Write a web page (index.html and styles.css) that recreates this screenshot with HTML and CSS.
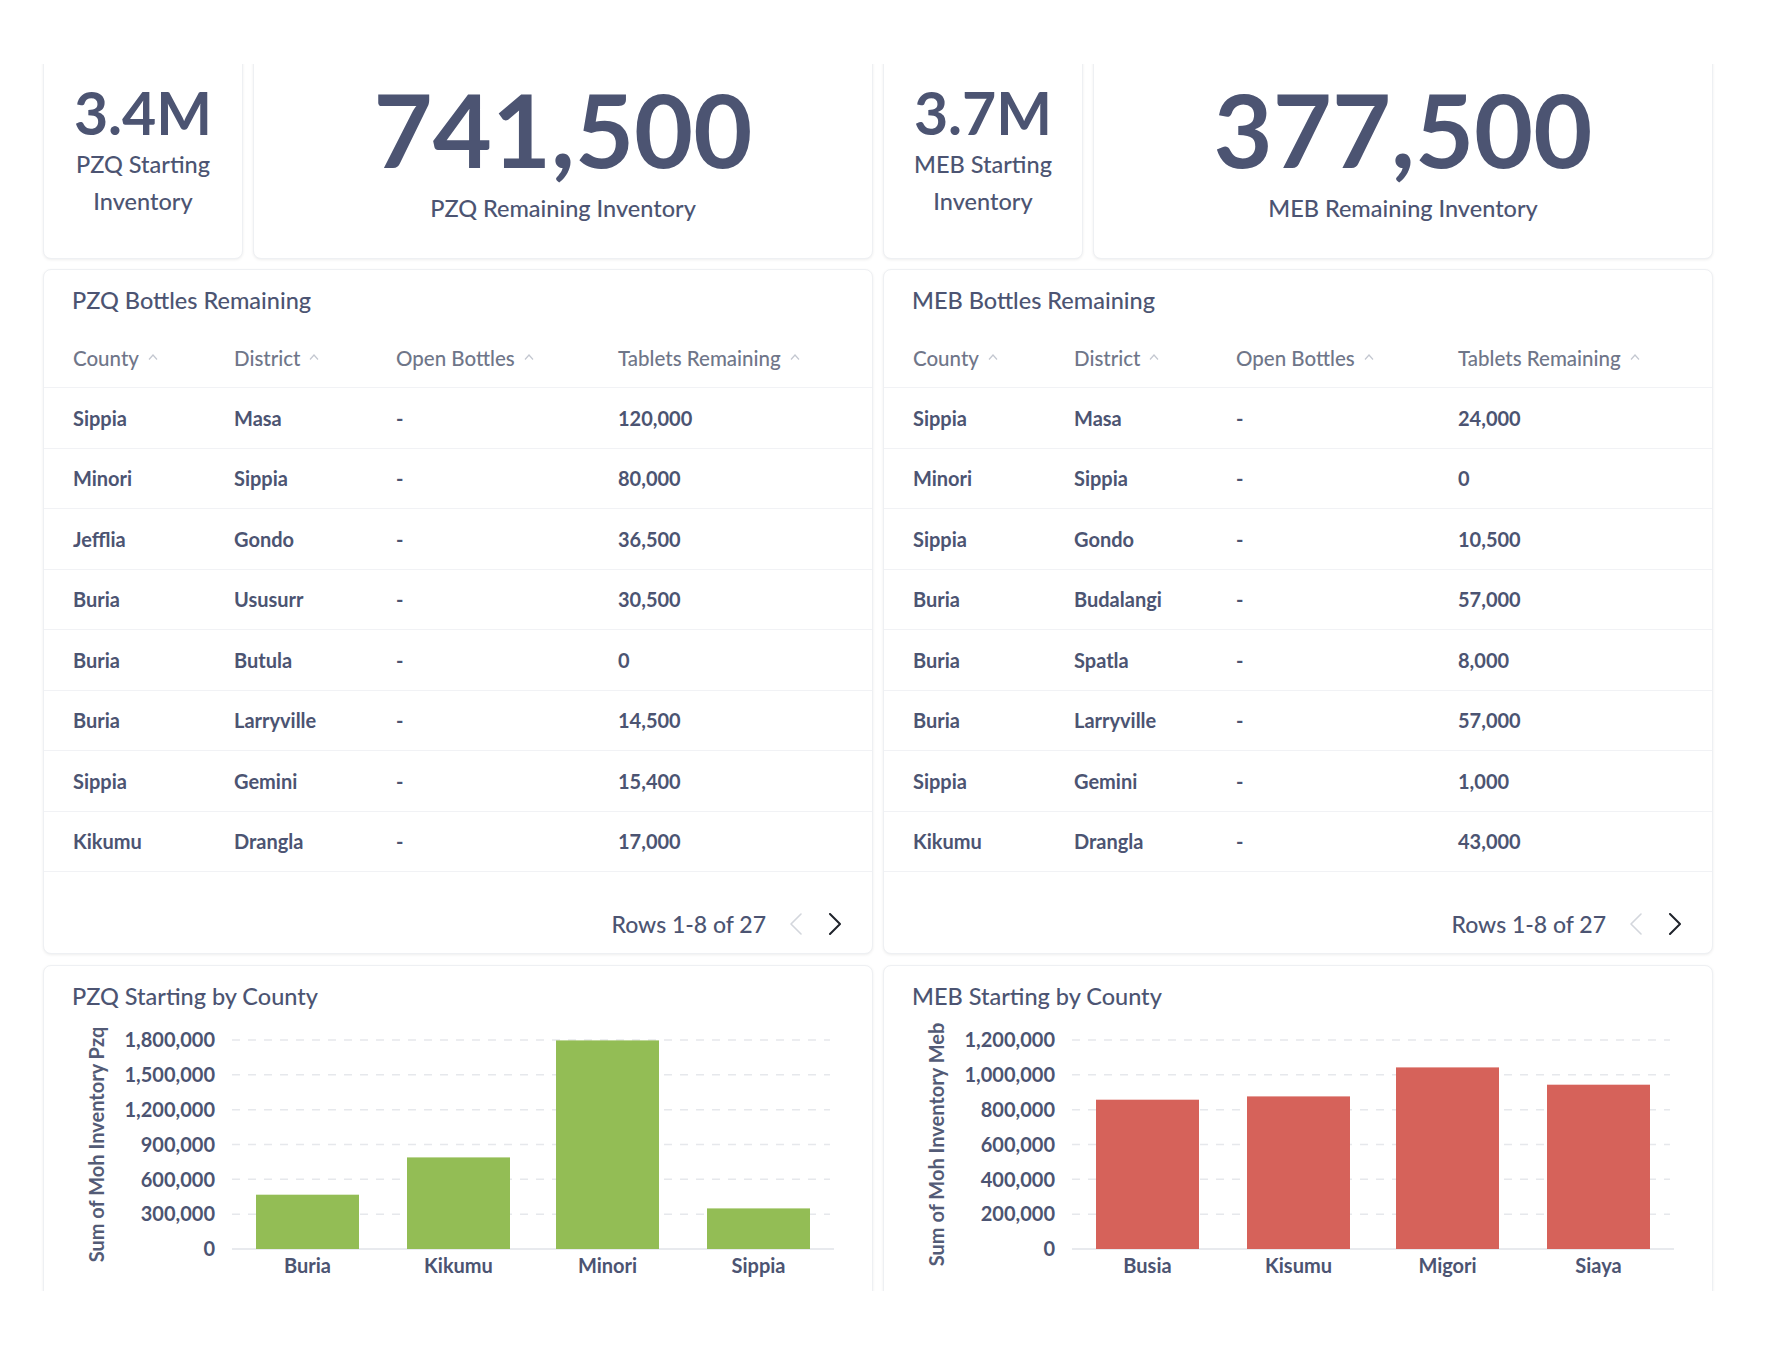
FILE: index.html
```html
<!DOCTYPE html>
<html lang="en">
<head>
<meta charset="utf-8">
<title>Inventory Dashboard</title>
<link rel="stylesheet" href="styles.css">
</head>
<body>
<div class="viewport">
  <div class="dash">
    <div class="row stats">
      <div class="card stat small">
        <div class="val">3.4M</div>
        <div class="lbl">PZQ Starting<br>Inventory</div>
      </div>
      <div class="card stat big">
        <div class="val">741,500</div>
        <div class="lbl">PZQ Remaining Inventory</div>
      </div>
      <div class="card stat small">
        <div class="val">3.7M</div>
        <div class="lbl">MEB Starting<br>Inventory</div>
      </div>
      <div class="card stat big">
        <div class="val">377,500</div>
        <div class="lbl">MEB Remaining Inventory</div>
      </div>
    </div>

    <div class="row tables">
      <div class="card table-card">
        <div class="title">PZQ Bottles Remaining</div>
        <div class="thead">
          <div class="c c1">County<svg class="sort" viewBox="0 0 10 6"><path d="M1 5.5 L5 1 L9 5.5"/></svg></div>
          <div class="c c2">District<svg class="sort" viewBox="0 0 10 6"><path d="M1 5.5 L5 1 L9 5.5"/></svg></div>
          <div class="c c3">Open Bottles<svg class="sort" viewBox="0 0 10 6"><path d="M1 5.5 L5 1 L9 5.5"/></svg></div>
          <div class="c c4">Tablets Remaining<svg class="sort" viewBox="0 0 10 6"><path d="M1 5.5 L5 1 L9 5.5"/></svg></div>
        </div>
        <div class="tr"><div class="c c1">Sippia</div><div class="c c2">Masa</div><div class="c c3">-</div><div class="c c4">120,000</div></div>
        <div class="tr"><div class="c c1">Minori</div><div class="c c2">Sippia</div><div class="c c3">-</div><div class="c c4">80,000</div></div>
        <div class="tr"><div class="c c1">Jefflia</div><div class="c c2">Gondo</div><div class="c c3">-</div><div class="c c4">36,500</div></div>
        <div class="tr"><div class="c c1">Buria</div><div class="c c2">Ususurr</div><div class="c c3">-</div><div class="c c4">30,500</div></div>
        <div class="tr"><div class="c c1">Buria</div><div class="c c2">Butula</div><div class="c c3">-</div><div class="c c4">0</div></div>
        <div class="tr"><div class="c c1">Buria</div><div class="c c2">Larryville</div><div class="c c3">-</div><div class="c c4">14,500</div></div>
        <div class="tr"><div class="c c1">Sippia</div><div class="c c2">Gemini</div><div class="c c3">-</div><div class="c c4">15,400</div></div>
        <div class="tr"><div class="c c1">Kikumu</div><div class="c c2">Drangla</div><div class="c c3">-</div><div class="c c4">17,000</div></div>
        <div class="pager">
          <span class="rows">Rows 1-8 of 27</span>
          <svg class="chev prev" viewBox="0 0 14 22"><path d="M12 1 L2 11 L12 21"/></svg>
          <svg class="chev next" viewBox="0 0 14 22"><path d="M3 1 L13 11 L3 21"/></svg>
        </div>
      </div>

      <div class="card table-card">
        <div class="title">MEB Bottles Remaining</div>
        <div class="thead">
          <div class="c c1">County<svg class="sort" viewBox="0 0 10 6"><path d="M1 5.5 L5 1 L9 5.5"/></svg></div>
          <div class="c c2">District<svg class="sort" viewBox="0 0 10 6"><path d="M1 5.5 L5 1 L9 5.5"/></svg></div>
          <div class="c c3">Open Bottles<svg class="sort" viewBox="0 0 10 6"><path d="M1 5.5 L5 1 L9 5.5"/></svg></div>
          <div class="c c4">Tablets Remaining<svg class="sort" viewBox="0 0 10 6"><path d="M1 5.5 L5 1 L9 5.5"/></svg></div>
        </div>
        <div class="tr"><div class="c c1">Sippia</div><div class="c c2">Masa</div><div class="c c3">-</div><div class="c c4">24,000</div></div>
        <div class="tr"><div class="c c1">Minori</div><div class="c c2">Sippia</div><div class="c c3">-</div><div class="c c4">0</div></div>
        <div class="tr"><div class="c c1">Sippia</div><div class="c c2">Gondo</div><div class="c c3">-</div><div class="c c4">10,500</div></div>
        <div class="tr"><div class="c c1">Buria</div><div class="c c2">Budalangi</div><div class="c c3">-</div><div class="c c4">57,000</div></div>
        <div class="tr"><div class="c c1">Buria</div><div class="c c2">Spatla</div><div class="c c3">-</div><div class="c c4">8,000</div></div>
        <div class="tr"><div class="c c1">Buria</div><div class="c c2">Larryville</div><div class="c c3">-</div><div class="c c4">57,000</div></div>
        <div class="tr"><div class="c c1">Sippia</div><div class="c c2">Gemini</div><div class="c c3">-</div><div class="c c4">1,000</div></div>
        <div class="tr"><div class="c c1">Kikumu</div><div class="c c2">Drangla</div><div class="c c3">-</div><div class="c c4">43,000</div></div>
        <div class="pager">
          <span class="rows">Rows 1-8 of 27</span>
          <svg class="chev prev" viewBox="0 0 14 22"><path d="M12 1 L2 11 L12 21"/></svg>
          <svg class="chev next" viewBox="0 0 14 22"><path d="M3 1 L13 11 L3 21"/></svg>
        </div>
      </div>
    </div>

    <div class="row charts">
      <div class="card chart-card">
        <div class="title">PZQ Starting by County</div>
        <svg class="chart" viewBox="0 0 828 290" width="828" height="290">
          <g class="grid">
            <line x1="188" y1="30" x2="786" y2="30"/>
            <line x1="188" y1="64.8" x2="786" y2="64.8"/>
            <line x1="188" y1="99.7" x2="786" y2="99.7"/>
            <line x1="188" y1="134.5" x2="786" y2="134.5"/>
            <line x1="188" y1="169.3" x2="786" y2="169.3"/>
            <line x1="188" y1="204.2" x2="786" y2="204.2"/>
          </g>
          <line class="axis" x1="188" y1="239" x2="790" y2="239"/>
          <g class="ticks">
            <text x="171" y="37.2">1,800,000</text>
            <text x="171" y="72">1,500,000</text>
            <text x="171" y="106.9">1,200,000</text>
            <text x="171" y="141.7">900,000</text>
            <text x="171" y="176.5">600,000</text>
            <text x="171" y="211.4">300,000</text>
            <text x="171" y="246.2">0</text>
          </g>
          <g class="bars green">
            <rect x="212" y="184.7" width="103" height="54.3"/>
            <rect x="363" y="147.4" width="103" height="91.6"/>
            <rect x="512" y="30.4" width="103" height="208.6"/>
            <rect x="663" y="198.4" width="103" height="40.6"/>
          </g>
          <g class="xlabels">
            <text x="263.5" y="263">Buria</text>
            <text x="414.5" y="263">Kikumu</text>
            <text x="563.5" y="263">Minori</text>
            <text x="714.5" y="263">Sippia</text>
          </g>
          <text class="ytitle" x="52" y="134.5" transform="rotate(-90 52 134.5)">Sum of Moh Inventory Pzq</text>
        </svg>
      </div>

      <div class="card chart-card">
        <div class="title">MEB Starting by County</div>
        <svg class="chart" viewBox="0 0 828 290" width="828" height="290">
          <g class="grid">
            <line x1="188" y1="30" x2="786" y2="30"/>
            <line x1="188" y1="64.8" x2="786" y2="64.8"/>
            <line x1="188" y1="99.7" x2="786" y2="99.7"/>
            <line x1="188" y1="134.5" x2="786" y2="134.5"/>
            <line x1="188" y1="169.3" x2="786" y2="169.3"/>
            <line x1="188" y1="204.2" x2="786" y2="204.2"/>
          </g>
          <line class="axis" x1="188" y1="239" x2="790" y2="239"/>
          <g class="ticks">
            <text x="171" y="37.2">1,200,000</text>
            <text x="171" y="72">1,000,000</text>
            <text x="171" y="106.9">800,000</text>
            <text x="171" y="141.7">600,000</text>
            <text x="171" y="176.5">400,000</text>
            <text x="171" y="211.4">200,000</text>
            <text x="171" y="246.2">0</text>
          </g>
          <g class="bars red">
            <rect x="212" y="89.7" width="103" height="149.3"/>
            <rect x="363" y="86.4" width="103" height="152.6"/>
            <rect x="512" y="57.4" width="103" height="181.6"/>
            <rect x="663" y="74.7" width="103" height="164.3"/>
          </g>
          <g class="xlabels">
            <text x="263.5" y="263">Busia</text>
            <text x="414.5" y="263">Kisumu</text>
            <text x="563.5" y="263">Migori</text>
            <text x="714.5" y="263">Siaya</text>
          </g>
          <text class="ytitle" x="52" y="134.5" transform="rotate(-90 52 134.5)">Sum of Moh Inventory Meb</text>
        </svg>
      </div>
    </div>
  </div>
</div>
</body>
</html>
```

FILE: styles.css
```css
* {
  box-sizing: border-box;
  margin: 0;
  padding: 0;
}

body {
  background: #ffffff;
  font-family: Lato, "Noto Sans", sans-serif;
  color: #4c5472;
}

.viewport {
  margin-top: 64px;
  height: 1227px;
  overflow: hidden;
  padding-left: 43px;
}

.dash {
  margin-top: -10px;
  width: 1670px;
  display: flex;
  flex-direction: column;
}

.row {
  display: flex;
  gap: 10px;
}

.stats {
  height: 205px;
}

.tables {
  margin-top: 10px;
  height: 685px;
}

.charts {
  margin-top: 11px;
  height: 400px;
}

.card {
  background: #ffffff;
  border: 1px solid #eef0f3;
  border-radius: 8px;
  box-shadow: 0 1px 3px rgba(0, 0, 0, 0.07);
}

/* ---------- scalar cards ---------- */
.stat {
  text-align: center;
}

.stat.small {
  width: 200px;
  padding-top: 28px;
}

.stat.big {
  width: 620px;
  padding-top: 22px;
}

.stat .val {
  font-weight: 700;
  color: #4c5472;
}

.small .val {
  font-size: 59px;
  line-height: 60px;
}

.big .val {
  font-size: 102px;
  line-height: 103px;
}

.stat .lbl {
  font-size: 23.5px;
  line-height: 37px;
  font-weight: 500;
  color: #4c5472;
}

.small .lbl {
  margin-top: 3px;
}

.big .lbl {
  margin-top: 10px;
}

/* ---------- tables ---------- */
.table-card {
  width: 830px;
  display: flex;
  flex-direction: column;
}

.title {
  font-size: 23.5px;
  line-height: 26px;
  font-weight: 500;
  color: #4c5472;
  padding: 17px 28px 0 28px;
}

.thead,
.tr {
  display: flex;
  align-items: center;
  padding-left: 29px;
  border-bottom: 1px solid #f1f2f5;
}

.thead {
  margin-top: 15px;
  height: 60px;
}

.tr {
  height: 60.5px;
}

.c {
  font-size: 20px;
  line-height: 24px;
  display: flex;
  align-items: center;
}

.c1 { width: 161px; }
.c2 { width: 162px; }
.c3 { width: 222px; }
.c4 { flex: 1; }

.thead .c {
  font-size: 20.5px;
  color: #6f7689;
  font-weight: 500;
}

.tr .c {
  color: #4c5472;
  font-weight: 700;
}

.sort {
  width: 10px;
  height: 6px;
  margin-left: 9px;
  margin-top: -2px;
  fill: none;
  stroke: #c3c7d0;
  stroke-width: 1.2;
}

.pager {
  flex: 1;
  display: flex;
  justify-content: flex-end;
  align-items: flex-end;
  padding: 0 31px 15px 0;
}

.pager .rows {
  font-size: 23px;
  line-height: 28px;
  font-weight: 500;
  color: #4c5472;
  margin-right: 23px;
}

.chev {
  width: 14px;
  height: 22px;
  margin-bottom: 3px;
  fill: none;
  stroke-linecap: round;
  stroke-linejoin: round;
}

.chev.prev {
  stroke: #d3d6dc;
  stroke-width: 1.6;
  margin-right: 24px;
}

.chev.next {
  stroke: #1f232b;
  stroke-width: 2;
}

/* ---------- charts ---------- */
.chart-card {
  width: 830px;
  display: flex;
  flex-direction: column;
}

.chart {
  display: block;
  margin-top: 1px;
  overflow: visible;
}

.grid line {
  stroke: #e6e8ec;
  stroke-width: 1.5;
  stroke-dasharray: 8 8;
}

.axis {
  stroke: #e8eaee;
  stroke-width: 2;
}

.ticks text {
  font-family: Lato, "Noto Sans", sans-serif;
  font-size: 20px;
  font-weight: 700;
  fill: #4c5472;
  text-anchor: end;
}

.xlabels text {
  font-family: Lato, "Noto Sans", sans-serif;
  font-size: 20px;
  font-weight: 700;
  fill: #4c5472;
  text-anchor: middle;
}

.ytitle {
  font-family: Lato, "Noto Sans", sans-serif;
  font-size: 20px;
  font-weight: 700;
  fill: #535b76;
  text-anchor: middle;
  dominant-baseline: central;
}

.green rect {
  fill: #93bd55;
}

.red rect {
  fill: #d6625a;
}
```
